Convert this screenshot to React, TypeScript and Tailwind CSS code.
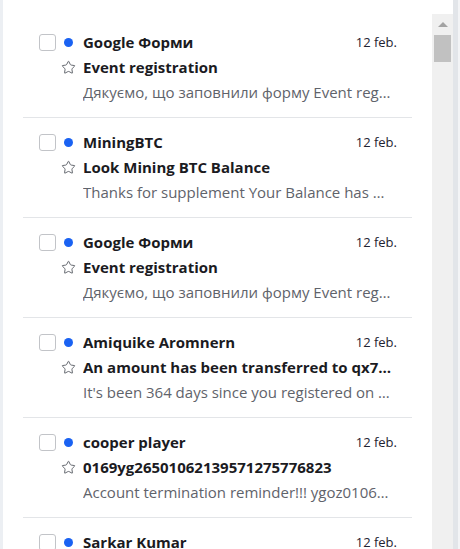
import { Star } from "lucide-react";

type Mail = {
  from: string;
  subject: string;
  snippet: string;
  date: string;
};

const mails: Mail[] = [
  {
    from: "Google Форми",
    subject: "Event registration",
    snippet: "Дякуємо, що заповнили форму Event registration",
    date: "12 feb.",
  },
  {
    from: "MiningBTC",
    subject: "Look Mining BTC Balance",
    snippet: "Thanks for supplement Your Balance has been updated",
    date: "12 feb.",
  },
  {
    from: "Google Форми",
    subject: "Event registration",
    snippet: "Дякуємо, що заповнили форму Event registration",
    date: "12 feb.",
  },
  {
    from: "Amiquike Aromnern",
    subject: "An amount has been transferred to qx7c81aa",
    snippet: "It's been 364 days since you registered on our site",
    date: "12 feb.",
  },
  {
    from: "cooper player",
    subject: "0169yg26501062139571275776823",
    snippet: "Account termination reminder!!! ygoz0106213957",
    date: "12 feb.",
  },
  {
    from: "Sarkar Kumar",
    subject: "Your wallet has been credited",
    snippet: "Please confirm the transaction within 24 hours",
    date: "12 feb.",
  },
];

function MailRow({ mail }: { mail: Mail }) {
  return (
    <div className="mx-[20px] border-b border-[#e3e5e8] pl-[16px] pr-[15px] py-[12px]">
      <div className="grid grid-cols-[17px_20px_1fr] gap-x-[3px]">
        <div className="h-[25px] flex items-center">
          <div className="w-[17px] h-[17px] rounded-[3px] border border-[#c2c4c8] bg-white" />
        </div>
        <div className="h-[25px] flex items-center justify-center pr-[2px] pb-[1px]">
          <div className="w-[9px] h-[9px] rounded-full bg-[#1a62f2]" />
        </div>
        <div className="h-[25px] flex items-center justify-between ml-[1px] min-w-0">
          <span className="truncate font-bold text-[15px] text-[#1b1b1f]">{mail.from}</span>
          <span className="shrink-0 text-[13px] text-[#1f2330]">{mail.date}</span>
        </div>

        <div />
        <div className="h-[25px] flex items-center justify-center pr-[1px]">
          <Star size={15} strokeWidth={1.5} className="text-[#5b5f66]" />
        </div>
        <div className="h-[25px] flex items-center ml-[1px] min-w-0">
          <span className="truncate font-bold text-[15px] text-[#1b1b1f]">{mail.subject}</span>
        </div>

        <div />
        <div />
        <div className="h-[25px] flex items-center ml-[1px] min-w-0 pr-[4px]">
          <span className="truncate text-[15px] text-[#5f636b]">{mail.snippet}</span>
        </div>
      </div>
    </div>
  );
}

export default function App() {
  return (
    <div
      className="flex h-[549px] w-[460px] overflow-hidden bg-white"
      style={{ fontFamily: '"Open Sans", "Noto Sans", sans-serif' }}
    >
      <div className="w-[3px] bg-[#eceff3]" />
      <div className="flex flex-1 flex-col min-w-0">
        <div className="h-[14px] overflow-hidden">
          <div className="mt-[-15px] pl-[30px] text-[14px] font-semibold text-[#2c3e5a] leading-[17px]">
            Всі
          </div>
        </div>
        <div className="flex flex-1 min-h-0">
          <div className="w-[429px] pt-[4px] overflow-hidden">
            {mails.map((m, i) => (
              <MailRow key={i} mail={m} />
            ))}
          </div>
          <div className="w-[21px] bg-[#f0f0f0] flex flex-col items-center">
            <div className="mt-[8px] w-0 h-0 border-l-[5px] border-r-[5px] border-b-[5px] border-l-transparent border-r-transparent border-b-[#a3a3a3]" />
            <div className="mt-[8px] w-[17px] h-[27px] bg-[#c1c1c1]" />
          </div>
        </div>
      </div>
      <div className="w-[5px] bg-[#e2e5e9]" />
      <div className="w-[2px] bg-[#f3f4f6]" />
    </div>
  );
}
